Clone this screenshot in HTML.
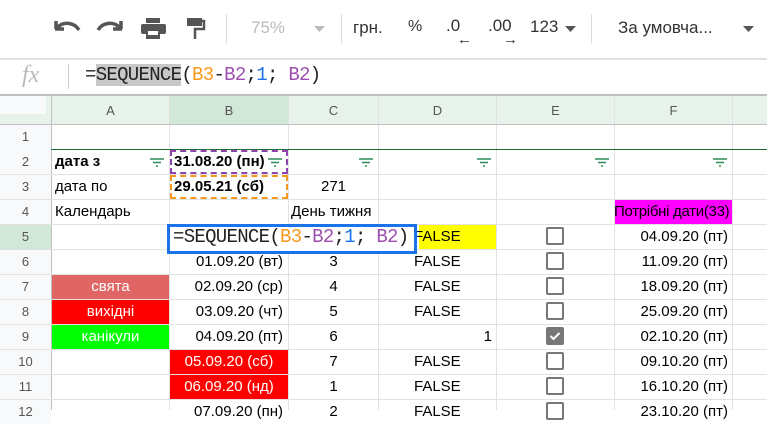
<!DOCTYPE html>
<html><head><meta charset="utf-8"><style>
body{margin:0;width:767px;height:410px;overflow:hidden;background:#fff;font-family:"Liberation Sans",Arial,sans-serif;position:relative}
.a{position:absolute}
.t{position:absolute;font-size:15px;color:#000;white-space:nowrap;line-height:24px;height:24px}
.vl{position:absolute;top:96px;width:1px;height:314px;background:#e2e2e2}
.hl{position:absolute;left:0;width:767px;height:1px;background:#e2e2e2}
.rh{position:absolute;left:0;width:51px;text-align:center;font-size:13px;color:#555;line-height:24px;background:#f8f9fa}
.ch{position:absolute;top:97px;height:27px;line-height:27px;text-align:center;font-size:13px;color:#555}
.cb{position:absolute;left:546px;width:14px;height:14px;border:2px solid #777;border-radius:2px}
.flt{position:absolute;width:14px;height:9px}
.r{text-align:right}.c{text-align:center}
.mono{font-family:'Liberation Mono',monospace;font-size:19px;color:#222;letter-spacing:-0.7px;white-space:nowrap}
</style></head><body>
<svg class="a" style="left:50px;top:16px" width="170" height="26" viewBox="0 0 170 26">
<path d="M6 13 L6 5 M5 13 L14 13 M7 12 C13 5 24 6 29 14" stroke="#555" stroke-width="3.5" fill="none"/>
<path d="M71 13 L71 5 M72 13 L63 13 M70 12 C64 5 53 6 48 14" stroke="#555" stroke-width="3.5" fill="none"/>
<rect x="96" y="2" width="14" height="5" fill="#555"/><rect x="91" y="8" width="25" height="10" rx="2" fill="#555"/><rect x="96" y="15" width="14" height="8" fill="#555"/><rect x="98" y="15" width="10" height="4" fill="#fff"/>
<rect x="137" y="2" width="15" height="8" fill="#555"/><path d="M151 5 h3 v8 h-9 v10" stroke="#555" stroke-width="2.5" fill="none"/>
</svg>
<div class="a" style="left:226px;top:14px;width:1px;height:30px;background:#ddd"></div>
<div class="a" style="left:251px;top:18px;font-size:17px;color:#bbb">75%</div>
<svg class="a" style="left:314px;top:26px" width="12" height="7"><path d="M0 0h11l-5.5 6z" fill="#bbb"/></svg>
<div class="a" style="left:341px;top:14px;width:1px;height:30px;background:#ddd"></div>
<div class="a" style="left:353px;top:18px;font-size:17px;color:#333">грн.</div>
<div class="a" style="left:408px;top:18px;font-size:16px;color:#333">%</div>
<div class="a" style="left:446px;top:16px;font-size:17px;color:#333">.0</div>
<div class="a" style="left:457px;top:31px;font-size:15px;color:#333;font-weight:bold">←</div>
<div class="a" style="left:488px;top:16px;font-size:17px;color:#333">.00</div>
<div class="a" style="left:503px;top:31px;font-size:15px;color:#333;font-weight:bold">→</div>
<div class="a" style="left:530px;top:17px;font-size:17px;color:#333">123</div>
<svg class="a" style="left:565px;top:26px" width="12" height="7"><path d="M0 0h11l-5.5 6z" fill="#555"/></svg>
<div class="a" style="left:591px;top:14px;width:1px;height:30px;background:#ddd"></div>
<div class="a" style="left:618px;top:18px;font-size:17px;color:#333">За умовча...</div>
<svg class="a" style="left:743px;top:26px" width="12" height="7"><path d="M0 0h11l-5.5 6z" fill="#555"/></svg>
<div class="a" style="left:0;top:58px;width:767px;height:2px;background:#e0e0e0"></div>
<div class="a" style="left:22px;top:62px;font-family:'Liberation Serif',serif;font-style:italic;font-size:24px;color:#bbb">fx</div>
<div class="a" style="left:68px;top:64px;width:1px;height:25px;background:#ccc"></div>
<div class="a mono" style="left:85px;top:64px">=<span style="background:#c8c8c8">SEQUENCE</span>(<span style="color:#f7981d">B3</span>-<span style="color:#9c4fae">B2</span>;<span style="color:#1a73e8">1</span>; <span style="color:#9c4fae">B2</span>)</div>
<div class="a" style="left:0;top:94px;width:767px;height:2px;background:#c0c0c0"></div>
<div class="a" style="left:0;top:96px;width:767px;height:28px;background:#e7f3ea"></div>
<div class="a" style="left:0;top:96px;width:46px;height:18px;background:#f8f9fa"></div>
<div class="a" style="left:170px;top:96px;width:118px;height:28px;background:#d1e7d8"></div>
<div class="ch" style="left:52px;width:117px">A</div><div class="ch" style="left:170px;width:118px">B</div><div class="ch" style="left:289px;width:89px">C</div><div class="ch" style="left:379px;width:117px">D</div><div class="ch" style="left:497px;width:117px">E</div><div class="ch" style="left:615px;width:117px">F</div>
<div class="a" style="left:0;top:124px;width:51px;height:286px;background:#f8f9fa"></div>
<div class="a" style="left:419px;top:225px;width:77px;height:24px;background:#ffff00"></div>
<div class="a" style="left:615px;top:200px;width:117px;height:24px;background:#ff00ff"></div>
<div class="a" style="left:52px;top:275px;width:117px;height:24px;background:#e06666"></div>
<div class="a" style="left:52px;top:300px;width:117px;height:24px;background:#ff0000"></div>
<div class="a" style="left:52px;top:325px;width:117px;height:24px;background:#00ff00"></div>
<div class="a" style="left:170px;top:350px;width:118px;height:49px;background:#ff0000"></div>
<div class="vl" style="left:51px;background:#c0c0c0"></div><div class="vl" style="left:169px"></div><div class="vl" style="left:288px"></div><div class="vl" style="left:378px"></div><div class="vl" style="left:496px"></div><div class="vl" style="left:614px"></div><div class="vl" style="left:732px"></div>
<div class="hl" style="top:124px;background:#c0c0c0"></div>
<div class="hl" style="top:149px;background:#1e6b30;left:51px"></div>
<div class="hl" style="top:174px"></div><div class="hl" style="top:199px"></div><div class="hl" style="top:224px"></div><div class="hl" style="top:249px"></div><div class="hl" style="top:274px"></div><div class="hl" style="top:299px"></div><div class="hl" style="top:324px"></div><div class="hl" style="top:349px"></div><div class="hl" style="top:374px"></div><div class="hl" style="top:399px"></div>
<div class="rh" style="top:125px">1</div><div class="rh" style="top:150px">2</div><div class="rh" style="top:175px">3</div><div class="rh" style="top:200px">4</div><div class="rh" style="top:225px;background:#d1e7d8">5</div><div class="rh" style="top:250px">6</div><div class="rh" style="top:275px">7</div><div class="rh" style="top:300px">8</div><div class="rh" style="top:325px">9</div><div class="rh" style="top:350px">10</div><div class="rh" style="top:375px">11</div><div class="rh" style="top:400px">12</div>
<div class="t" style="left:55px;top:150px;font-weight:bold">дата з</div>
<div class="t" style="left:55px;top:175px">дата по</div>
<div class="t" style="left:55px;top:200px">Календарь</div>
<div class="a" style="left:170px;top:150px;width:114px;height:20px;border:2px dashed #8e44ad"></div>
<div class="a" style="left:170px;top:175px;width:114px;height:20px;border:2px dashed #f7981d"></div>
<div class="t" style="left:174px;top:150px;font-weight:bold">31.08.20 (пн)</div>
<div class="t" style="left:174px;top:175px;font-weight:bold">29.05.21 (сб)</div>
<div class="t c" style="left:289px;top:175px;width:89px">271</div>
<div class="t" style="left:291px;top:200px">День тижня</div>
<div class="t" style="left:614px;top:200px;width:117px;overflow:visible;letter-spacing:-0.3px">Потрібні дати(33)</div>
<svg class="flt" style="left:150px;top:158px"><path d="M0 1h14M3 4.5h8M6 8h2" stroke="#2e8b57" stroke-width="1.5"/></svg>
<svg class="flt" style="left:268px;top:158px"><path d="M0 1h14M3 4.5h8M6 8h2" stroke="#2e8b57" stroke-width="1.5"/></svg>
<svg class="flt" style="left:359px;top:158px"><path d="M0 1h14M3 4.5h8M6 8h2" stroke="#2e8b57" stroke-width="1.5"/></svg>
<svg class="flt" style="left:477px;top:158px"><path d="M0 1h14M3 4.5h8M6 8h2" stroke="#2e8b57" stroke-width="1.5"/></svg>
<svg class="flt" style="left:595px;top:158px"><path d="M0 1h14M3 4.5h8M6 8h2" stroke="#2e8b57" stroke-width="1.5"/></svg>
<svg class="flt" style="left:713px;top:158px"><path d="M0 1h14M3 4.5h8M6 8h2" stroke="#2e8b57" stroke-width="1.5"/></svg>
<div class="t r" style="left:170px;top:250px;width:113px">01.09.20 (вт)</div>
<div class="t r" style="left:170px;top:275px;width:113px">02.09.20 (ср)</div>
<div class="t r" style="left:170px;top:300px;width:113px">03.09.20 (чт)</div>
<div class="t r" style="left:170px;top:325px;width:113px">04.09.20 (пт)</div>
<div class="t c" style="left:170px;top:350px;width:118px;color:#fff">05.09.20 (сб)</div>
<div class="t c" style="left:170px;top:375px;width:118px;color:#fff">06.09.20 (нд)</div>
<div class="t c" style="left:289px;top:250px;width:89px">3</div>
<div class="t c" style="left:289px;top:275px;width:89px">4</div>
<div class="t c" style="left:289px;top:300px;width:89px">5</div>
<div class="t c" style="left:289px;top:325px;width:89px">6</div>
<div class="t c" style="left:289px;top:350px;width:89px">7</div>
<div class="t c" style="left:289px;top:375px;width:89px">1</div>
<div class="t c" style="left:52px;top:275px;width:117px;color:#fff">свята</div>
<div class="t c" style="left:52px;top:300px;width:117px;color:#fff">вихідні</div>
<div class="t c" style="left:52px;top:325px;width:117px;color:#fff">канікули</div>
<div class="t" style="left:414px;top:225px">FALSE</div>
<div class="t" style="left:414px;top:250px">FALSE</div>
<div class="t" style="left:414px;top:275px">FALSE</div>
<div class="t" style="left:414px;top:300px">FALSE</div>
<div class="t r" style="left:379px;top:325px;width:113px">1</div>
<div class="t" style="left:414px;top:350px">FALSE</div>
<div class="t" style="left:414px;top:375px">FALSE</div>
<div class="t" style="left:414px;top:400px">FALSE</div>
<div class="cb" style="top:227px"></div><div class="cb" style="top:252px"></div><div class="cb" style="top:277px"></div><div class="cb" style="top:302px"></div>
<div class="cb" style="top:327px;background:#777"><svg width="14" height="14" class="a" style="left:0;top:0"><path d="M2.5 7l3 3 6-6" stroke="#fff" stroke-width="2" fill="none"/></svg></div>
<div class="cb" style="top:352px"></div><div class="cb" style="top:377px"></div><div class="cb" style="top:402px"></div>
<div class="t r" style="left:615px;top:225px;width:113px">04.09.20 (пт)</div>
<div class="t r" style="left:615px;top:250px;width:113px">11.09.20 (пт)</div>
<div class="t r" style="left:615px;top:275px;width:113px">18.09.20 (пт)</div>
<div class="t r" style="left:615px;top:300px;width:113px">25.09.20 (пт)</div>
<div class="t r" style="left:615px;top:325px;width:113px">02.10.20 (пт)</div>
<div class="t r" style="left:615px;top:350px;width:113px">09.10.20 (пт)</div>
<div class="t r" style="left:615px;top:375px;width:113px">16.10.20 (пт)</div>
<div class="t r" style="left:170px;top:400px;width:113px">07.09.20 (пн)</div>
<div class="t c" style="left:289px;top:400px;width:89px">2</div>
<div class="t r" style="left:615px;top:400px;width:113px">23.10.20 (пт)</div>
<div class="a" style="left:167px;top:224px;width:244px;height:24px;border:3px solid #1a73e8;background:#fff"></div>
<div class="a mono" style="left:173px;top:226px">=SEQUENCE(<span style="color:#f7981d">B3</span>-<span style="color:#9c4fae">B2</span>;<span style="color:#1a73e8">1</span>; <span style="color:#9c4fae">B2</span>)</div>
</body></html>
